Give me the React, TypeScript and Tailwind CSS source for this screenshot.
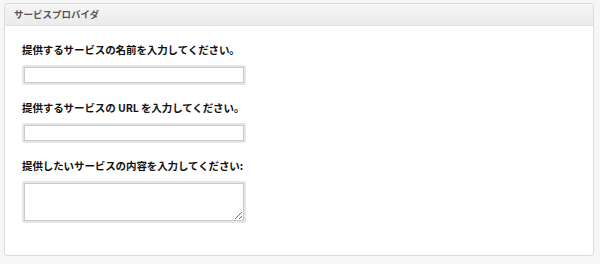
import React from 'react';

const fields = [
  { label: '提供するサービスの名前を入力してください。', kind: 'input' },
  { label: '提供するサービスの URL を入力してください。', kind: 'input' },
  { label: '提供したいサービスの内容を入力してください:', kind: 'textarea' },
];

export default function App() {
  return (
    <div className="min-h-[264px] w-[600px] bg-[#f6f6f6] pt-[3px] pl-[4px] font-['Noto_Sans_CJK_JP',sans-serif]">
      <div className="w-[590px] h-[253px] rounded-[3px] border border-[#dcdcdc] bg-white overflow-hidden">
        {/* header */}
        <div className="h-[22px] flex items-center pl-[9px] border-b border-[#e2e2e2] bg-gradient-to-b from-[#f5f5f5] to-[#ebebeb]">
          <span className="text-[9.5px] font-bold text-[#555] leading-none">サービスプロバイダ</span>
        </div>

        <div className="pl-[17px] pt-[17px] flex flex-col gap-[16px]">
          {fields.map((f) => (
            <div key={f.label} className="flex flex-col gap-[8px]">
              <label className="text-[10.5px] leading-[14px] font-bold text-[#111] tracking-[-0.1px]">{f.label}</label>
              <div className="w-[224px] p-[2px] bg-[#e6e6e6] rounded-[2px]">
                {f.kind === 'input' ? (
                  <input className="block w-full h-[16px] bg-white border border-[#c9c9c9] outline-none" />
                ) : (
                  <textarea className="block w-full h-[38px] bg-white border border-[#c9c9c9] outline-none" />
                )}
              </div>
            </div>
          ))}
        </div>
      </div>
    </div>
  );
}
